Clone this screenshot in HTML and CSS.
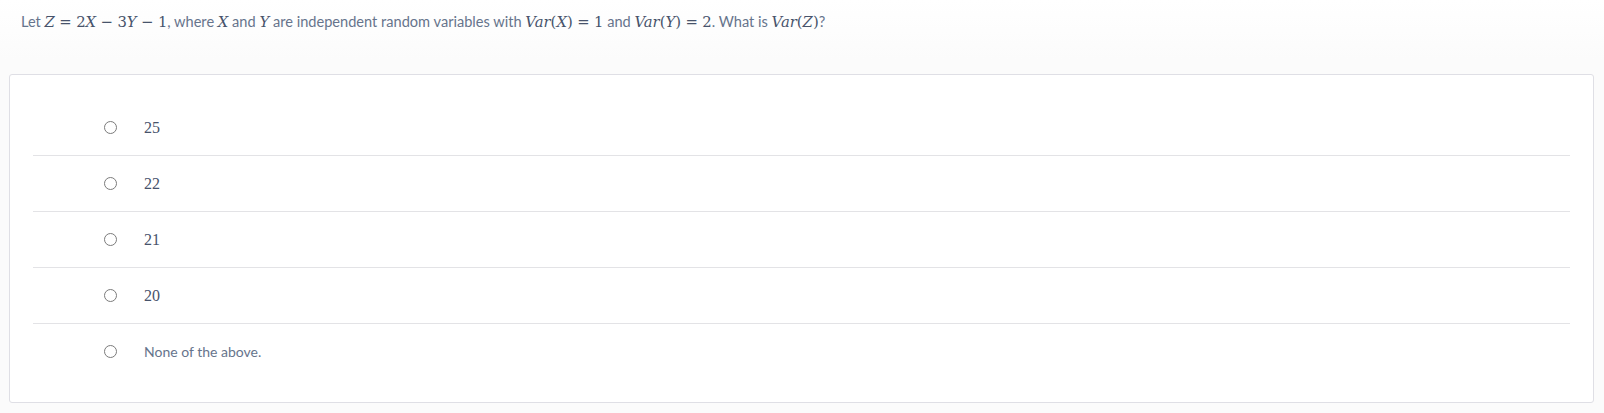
FILE: index.html
```html
<!DOCTYPE html>
<html>
<head>
<meta charset="utf-8">
<link rel="stylesheet" href="styles.css">
</head>
<body>
<div class="page">
  <p class="question">Let <span class="m"><i>Z</i><span class="rel">=</span>2<i>X</i><span class="bin">−</span>3<i>Y</i><span class="bin">−</span>1</span>, where <span class="m"><i>X</i></span> and <span class="m"><i>Y</i></span> are independent random variables with <span class="m"><i>Var</i>(<i>X</i>)<span class="rel">=</span>1</span> and <span class="m"><i>Var</i>(<i>Y</i>)<span class="rel">=</span>2</span>. What is <span class="m"><i>Var</i>(<i>Z</i>)</span>?</p>
  <div class="card">
    <ul class="options">
      <li class="option"><span class="radio"></span><span class="label num">25</span></li>
      <li class="option"><span class="radio"></span><span class="label num">22</span></li>
      <li class="option"><span class="radio"></span><span class="label num">21</span></li>
      <li class="option"><span class="radio"></span><span class="label num">20</span></li>
      <li class="option"><span class="radio"></span><span class="label">None of the above.</span></li>
    </ul>
  </div>
</div>
</body>
</html>
```
FILE: styles.css
```css
html, body {
  margin: 0;
  padding: 0;
}
body {
  background: linear-gradient(#ffffff 0px, #fbfbfb 60px, #fbfbfb 100%);
  font-family: Lato, "Open Sans", sans-serif;
  color: #66748c;
  width: 1604px;
  height: 413px;
  overflow: hidden;
}
.page {
  padding: 12px 10px 0 9px;
}
.question {
  margin: 0 0 0 12px;
  font-size: 14.6px;
  line-height: 20px;
  height: 62px;
}
.m {
  font-family: "DejaVu Serif", "Liberation Serif", serif;
  font-size: 14.8px;
  color: #47536b;
}
.m i {
  font-style: italic;
}
.rel {
  margin: 0 0.3em;
}
.bin {
  margin: 0 0.3em;
}
.card {
  background: #ffffff;
  border: 1px solid #dfdfe5;
  border-radius: 3px;
  padding: 25px 23px 23px 23px;
}
.options {
  list-style: none;
  margin: 0;
  padding: 0;
}
.option {
  display: flex;
  align-items: center;
  height: 55px;
  border-bottom: 1px solid #e3e3e6;
  padding-left: 71px;
}
.option:last-child {
  border-bottom: none;
}
.radio {
  width: 11px;
  height: 11px;
  border: 1px solid #7b7b7b;
  border-radius: 50%;
  flex: none;
}
.label {
  margin-left: 27px;
  font-size: 14px;
}
.label.num {
  font-family: "Liberation Serif", serif;
  font-size: 16px;
  color: #47536b;
}
```
